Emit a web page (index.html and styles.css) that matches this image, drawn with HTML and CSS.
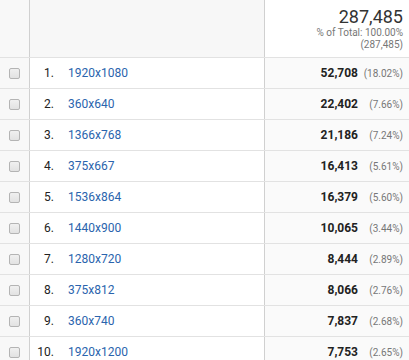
FILE: index.html
```html
<!DOCTYPE html>
<html lang="en">

<head>
    <meta charset="UTF-8">
    <meta name="viewport" content="width=device-width, initial-scale=1.0">
    <title>Screen Resolution</title>
    <link rel="stylesheet" href="styles.css">
</head>

<body>

    <div class="report">
        <div class="row head">
            <div class="cell check"></div>
            <div class="cell dim"></div>
            <div class="cell metric">
                <div class="total">287,485</div>
                <div class="share">% of Total: 100.00%</div>
                <div class="share">(287,485)</div>
            </div>
        </div>

        <div class="row">
            <div class="cell check"><span class="box"></span></div>
            <div class="cell dim"><span class="idx">1.</span><a class="name" href="#">1920x1080</a></div>
            <div class="cell metric"><span class="val">52,708</span><span class="pct">(18.02%)</span></div>
        </div>
        <div class="row">
            <div class="cell check"><span class="box"></span></div>
            <div class="cell dim"><span class="idx">2.</span><a class="name" href="#">360x640</a></div>
            <div class="cell metric"><span class="val">22,402</span><span class="pct">(7.66%)</span></div>
        </div>
        <div class="row">
            <div class="cell check"><span class="box"></span></div>
            <div class="cell dim"><span class="idx">3.</span><a class="name" href="#">1366x768</a></div>
            <div class="cell metric"><span class="val">21,186</span><span class="pct">(7.24%)</span></div>
        </div>
        <div class="row">
            <div class="cell check"><span class="box"></span></div>
            <div class="cell dim"><span class="idx">4.</span><a class="name" href="#">375x667</a></div>
            <div class="cell metric"><span class="val">16,413</span><span class="pct">(5.61%)</span></div>
        </div>
        <div class="row">
            <div class="cell check"><span class="box"></span></div>
            <div class="cell dim"><span class="idx">5.</span><a class="name" href="#">1536x864</a></div>
            <div class="cell metric"><span class="val">16,379</span><span class="pct">(5.60%)</span></div>
        </div>
        <div class="row">
            <div class="cell check"><span class="box"></span></div>
            <div class="cell dim"><span class="idx">6.</span><a class="name" href="#">1440x900</a></div>
            <div class="cell metric"><span class="val">10,065</span><span class="pct">(3.44%)</span></div>
        </div>
        <div class="row">
            <div class="cell check"><span class="box"></span></div>
            <div class="cell dim"><span class="idx">7.</span><a class="name" href="#">1280x720</a></div>
            <div class="cell metric"><span class="val">8,444</span><span class="pct">(2.89%)</span></div>
        </div>
        <div class="row">
            <div class="cell check"><span class="box"></span></div>
            <div class="cell dim"><span class="idx">8.</span><a class="name" href="#">375x812</a></div>
            <div class="cell metric"><span class="val">8,066</span><span class="pct">(2.76%)</span></div>
        </div>
        <div class="row">
            <div class="cell check"><span class="box"></span></div>
            <div class="cell dim"><span class="idx">9.</span><a class="name" href="#">360x740</a></div>
            <div class="cell metric"><span class="val">7,837</span><span class="pct">(2.68%)</span></div>
        </div>
        <div class="row">
            <div class="cell check"><span class="box"></span></div>
            <div class="cell dim"><span class="idx">10.</span><a class="name" href="#">1920x1200</a></div>
            <div class="cell metric"><span class="val">7,753</span><span class="pct">(2.65%)</span></div>
        </div>
    </div>

</body>

</html>
```

FILE: styles.css
```css
body {
    margin: 0;
    font-family: Roboto, Arial, sans-serif;
    background: #fff;
    color: #222;
}

.report {
    width: 409px;
}

.row {
    display: grid;
    grid-template-columns: 30px 235px 1fr;
    height: 31px;
    border-bottom: 1px solid #e2e2e2;
    box-sizing: border-box;
}

.row.head {
    height: 58px;
}

.cell {
    border-right: 1px solid #d0d0d0;
    box-sizing: border-box;
    display: flex;
    align-items: center;
}

.cell.metric {
    border-right: none;
    justify-content: flex-end;
    background: #fafafa;
    padding-right: 6px;
}

.check {
    background: #f8f8f8;
    justify-content: center;
}

.head .dim {
    background: #f7f7f7;
}

.head .metric {
    background: #fff;
    flex-direction: column;
    align-items: flex-end;
    justify-content: flex-start;
    padding-top: 6px;
}

.box {
    width: 11px;
    height: 11px;
    box-sizing: border-box;
    border: 1px solid #b4b4b4;
    border-radius: 2px;
    background: linear-gradient(#f0f0f0, #e2e2e2);
}

.idx {
    width: 24px;
    text-align: right;
    font-size: 12px;
    color: #222;
}

.name {
    margin-left: 14px;
    font-size: 12px;
    color: #2a64ad;
    text-decoration: none;
}

.val {
    font-size: 12px;
    font-weight: bold;
    color: #222;
}

.pct {
    width: 45px;
    text-align: right;
    font-size: 10px;
    color: #777;
}

.total {
    font-size: 18px;
    line-height: 21px;
    color: #333;
}

.share {
    font-size: 10px;
    line-height: 12px;
    color: #777;
}
```
